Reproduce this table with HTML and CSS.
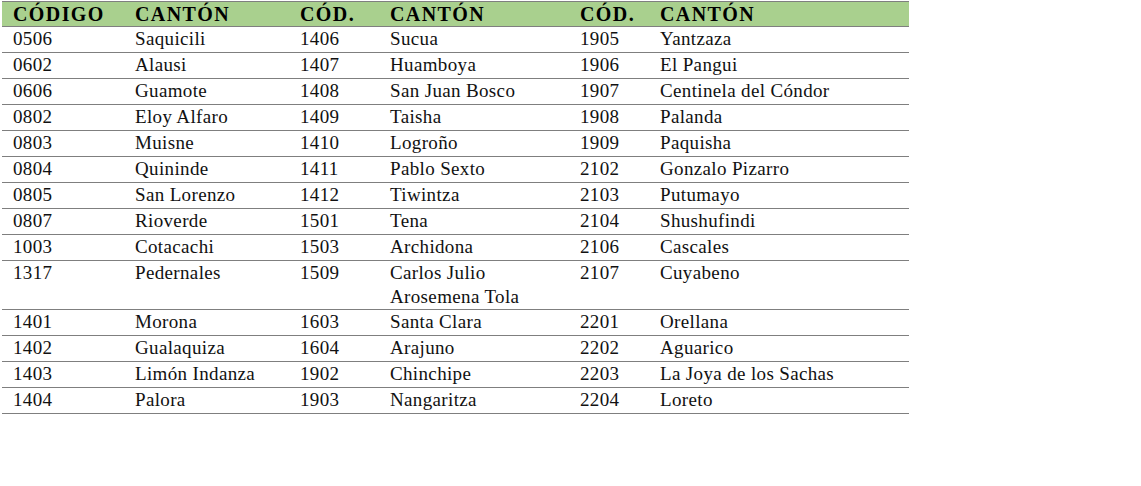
FILE: index.html
```html
<!DOCTYPE html>
<html lang="es">
<head>
<meta charset="utf-8">
<title>Cantones</title>
<link rel="stylesheet" href="styles.css">
</head>
<body>
<table class="tbl">
  <colgroup>
    <col class="c1"><col class="c2"><col class="c3"><col class="c4"><col class="c5"><col class="c6">
  </colgroup>
  <thead>
    <tr><th>CÓDIGO</th><th>CANTÓN</th><th>CÓD.</th><th>CANTÓN</th><th>CÓD.</th><th>CANTÓN</th></tr>
  </thead>
  <tbody>
    <tr><td>0506</td><td>Saquicili</td><td>1406</td><td>Sucua</td><td>1905</td><td>Yantzaza</td></tr>
    <tr><td>0602</td><td>Alausi</td><td>1407</td><td>Huamboya</td><td>1906</td><td>El Pangui</td></tr>
    <tr><td>0606</td><td>Guamote</td><td>1408</td><td>San Juan Bosco</td><td>1907</td><td>Centinela del Cóndor</td></tr>
    <tr><td>0802</td><td>Eloy Alfaro</td><td>1409</td><td>Taisha</td><td>1908</td><td>Palanda</td></tr>
    <tr><td>0803</td><td>Muisne</td><td>1410</td><td>Logroño</td><td>1909</td><td>Paquisha</td></tr>
    <tr><td>0804</td><td>Quininde</td><td>1411</td><td>Pablo Sexto</td><td>2102</td><td>Gonzalo Pizarro</td></tr>
    <tr><td>0805</td><td>San Lorenzo</td><td>1412</td><td>Tiwintza</td><td>2103</td><td>Putumayo</td></tr>
    <tr><td>0807</td><td>Rioverde</td><td>1501</td><td>Tena</td><td>2104</td><td>Shushufindi</td></tr>
    <tr><td>1003</td><td>Cotacachi</td><td>1503</td><td>Archidona</td><td>2106</td><td>Cascales</td></tr>
    <tr><td>1317</td><td>Pedernales</td><td>1509</td><td>Carlos Julio<br>Arosemena Tola</td><td>2107</td><td>Cuyabeno</td></tr>
    <tr><td>1401</td><td>Morona</td><td>1603</td><td>Santa Clara</td><td>2201</td><td>Orellana</td></tr>
    <tr><td>1402</td><td>Gualaquiza</td><td>1604</td><td>Arajuno</td><td>2202</td><td>Aguarico</td></tr>
    <tr><td>1403</td><td>Limón Indanza</td><td>1902</td><td>Chinchipe</td><td>2203</td><td>La Joya de los Sachas</td></tr>
    <tr><td>1404</td><td>Palora</td><td>1903</td><td>Nangaritza</td><td>2204</td><td>Loreto</td></tr>
  </tbody>
</table>
</body>
</html>
```
FILE: styles.css
```css
html, body {
  margin: 0;
  padding: 0;
  background: #ffffff;
}
body {
  padding: 1px 0 0 2px;
  font-family: "Liberation Serif", "Times New Roman", serif;
  color: #111111;
}
.tbl {
  border-collapse: collapse;
  table-layout: fixed;
  width: 907px;
}
.c1 { width: 122px; }
.c2 { width: 165px; }
.c3 { width: 90px; }
.c4 { width: 190px; }
.c5 { width: 80px; }
.c6 { width: 260px; }
.tbl th,
.tbl td {
  padding: 0 0 0 11px;
  text-align: left;
  vertical-align: top;
  white-space: nowrap;
}
.tbl th {
  background: #a9d08e;
  font-weight: bold;
  font-size: 20px;
  letter-spacing: 1.4px;
  line-height: 24px;
  height: 24px;
  border-top: 1px solid #7f7f7f;
  border-bottom: 1px solid #7f7f7f;
  color: #000;
}
.tbl td {
  font-size: 19px;
  letter-spacing: 0.35px;
  line-height: 24px;
  height: 25px;
  border-bottom: 1px solid #7f7f7f;
}
```
